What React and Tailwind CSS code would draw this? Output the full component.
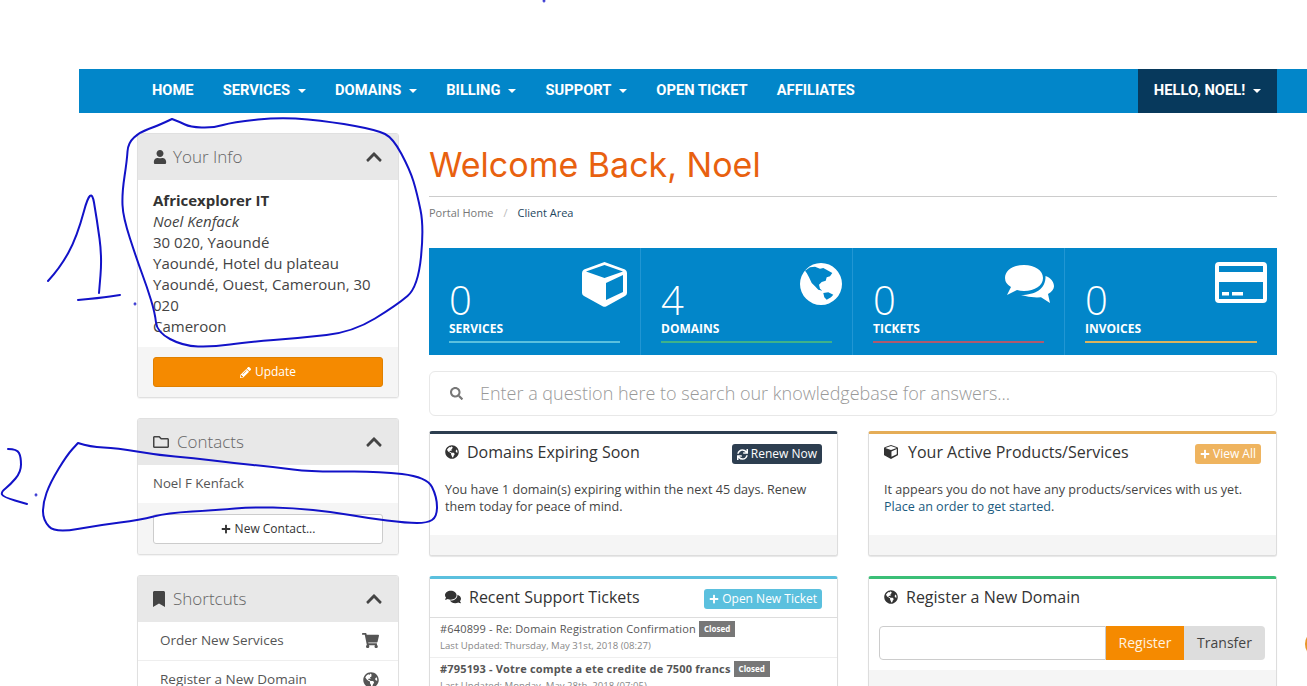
import {
  FaBookmark, FaChevronUp, FaComments, FaGlobeAmericas, FaPencilAlt, FaPlus,
  FaRegFolder, FaSearch, FaShoppingCart, FaSync, FaUser,
} from 'react-icons/fa';

const navItems = [
  { label: 'HOME' },
  { label: 'SERVICES', caret: true },
  { label: 'DOMAINS', caret: true },
  { label: 'BILLING', caret: true },
  { label: 'SUPPORT', caret: true },
  { label: 'OPEN TICKET' },
  { label: 'AFFILIATES' },
];

function CubeIcon({ className }) {
  return (
    <svg className={className} viewBox="0 0 45 45" fill="currentColor" fillRule="evenodd">
      <path d="M22.5 0 L43 7.5 Q45 8.5 45 11 L45 31 Q45 33 43 34 L24 44.5 Q22.5 45 21 44.5 L2 34 Q0 33 0 31 L0 11 Q0 8.5 2 7.5 Z M22.5 3 L4 9.5 L22.5 16 L41 9.5 Z M24 21 L24 38 L41 30 L41 13 Z" />
    </svg>
  );
}

function GlobeIcon({ className }) {
  return (
    <svg className={className} viewBox="0 0 42 42" fill="currentColor" fillRule="evenodd">
      <path d="M21 0 A21 21 0 1 0 21 42 A21 21 0 1 0 21 0 Z M5 7.700 L10 4.300 L15 3.700 L20 5.700 L23.300 5 L28.300 7.700 L32.300 10 L30 13.300 L26.700 14.300 L25.700 17.700 L21.700 19 L19 21.700 L20 25.700 L22.300 27.700 L18.300 26.700 L15 23.300 L11.700 20 L9 14.300 L6.700 10 Z M23.300 30 L28.300 29.300 L33.300 31.700 L31 34.300 L26.700 36.700 L24.300 34.300 Z" />
    </svg>
  );
}

function ChatIcon({ className }) {
  return (
    <svg className={className} viewBox="0 0 49 38" fill="currentColor">
      <path d="M40.500 11 C46 13 49 17 49 21.300 C49 24 47 27 43 29 L45 38 L36 32.300 Q25 33 16 30 C30 30 41 24 40.500 11 Z" />
      <path d="M19 0 C30 0 38 5.500 38 13 C38 20.500 30 26 19 26 Q15 26 12 25 L2 30 L6 22 Q0 18.500 0 13 C0 5.500 8 0 19 0 Z" />
    </svg>
  );
}

function CardIcon({ className }) {
  return (
    <svg className={className} viewBox="0 0 52 41" fill="currentColor" fillRule="evenodd">
      <path d="M4 0 L48 0 Q52 0 52 4 L52 37 Q52 41 48 41 L4 41 Q0 41 0 37 L0 4 Q0 0 4 0 Z M4 4 L4 10 L48 10 L48 4 Z M4 20 L4 37 L48 37 L48 20 Z" />
      <path d="M7 30 H14 V33.500 H7 Z M17 30 H28 V33.500 H17 Z" />
    </svg>
  );
}

const stats = [
  { n: '0', label: 'SERVICES', Icon: CubeIcon, icon: 'w-[45px] h-[45px] right-[13px] top-[14px]', line: 'bg-[#5bc0de]' },
  { n: '4', label: 'DOMAINS', Icon: GlobeIcon, icon: 'w-[42px] h-[42px] right-[10px] top-[15px]', line: 'bg-[#3fb28a]' },
  { n: '0', label: 'TICKETS', Icon: ChatIcon, icon: 'w-[49px] h-[38px] right-[10px] top-[17px]', line: 'bg-[#b0596f]' },
  { n: '0', label: 'INVOICES', Icon: CardIcon, icon: 'w-[52px] h-[41px] right-[10px] top-[14px]', line: 'bg-[#d9b45f]' },
];

// hand drawn pen marks, coordinates are page pixels
const loopOne = [[172,119],[180,122],[190,127],[213,128],[233,122],[283,117],[333,122],[377,130],[393,138],[410,170],[417,193],[424,227],[418,287],[397,305],[353,332],[300,338],[247,342],[213,347],[183,346],[157,332],[155,313],[147,287],[137,260],[123,217],[122,193],[127,160],[128,143],[140,132],[157,126],[172,119]];
const loopTwo = [[78,443],[90,447],[117,448],[157,455],[193,458],[233,463],[273,467],[313,472],[377,471],[427,477],[437,497],[437,517],[427,523],[407,523],[367,518],[333,512],[293,508],[253,507],[217,510],[167,513],[140,520],[100,525],[55,533],[43,520],[43,503],[50,483],[67,455],[78,443]];
const numOne = [[48,281],[60,268],[77,237],[91,185],[97,220],[102,257],[99,293]];
const numOneBase = [[78,300],[100,298],[120,295]];
const numTwo = [[8,449],[17,449],[21,457],[21,472],[10,485],[1,492],[3,497],[27,504]];

function smooth(pts) {
  let d = `M${pts[0][0]} ${pts[0][1]}`;
  for (let i = 1; i < pts.length - 1; i++) {
    const mx = (pts[i][0] + pts[i + 1][0]) / 2;
    const my = (pts[i][1] + pts[i + 1][1]) / 2;
    d += ` Q${pts[i][0]} ${pts[i][1]} ${mx} ${my}`;
  }
  const last = pts[pts.length - 1];
  return `${d} L${last[0]} ${last[1]}`;
}

function SidePanel({ Icon, iconSize, title, gap, children }) {
  return (
    <div className="border border-[#e0e0e0] rounded-[3px] bg-white shadow-[0_1px_1px_rgba(0,0,0,0.05)] overflow-hidden">
      <div className="h-[46px] bg-[#e8e8e8] pl-[15px] pr-[15px] flex items-center">
        <Icon className={`${iconSize} text-[#444]`} />
        <span className={`${gap} text-[17px] font-light text-[#666]`}>{title}</span>
        <FaChevronUp className="ml-auto text-[18px] text-[#444]" />
      </div>
      {children}
    </div>
  );
}

function Card({ top, icon, title, gap, action, children, footer = 'h-5' }) {
  return (
    <div className={`border border-[#ddd] border-t-[3px] ${top} rounded-[3px] bg-white shadow-[0_1px_1px_rgba(0,0,0,0.1)] overflow-hidden`}>
      <div className="flex items-start h-[38px] pt-[10px] pl-[15px] pr-[15px]">
        <div className="h-4 flex items-center text-[#333]">{icon}</div>
        <span className={`${gap} text-[16px] leading-4 text-[#333]`}>{title}</span>
        {action}
      </div>
      {children}
      {footer && <div className={`${footer} bg-[#f5f5f5]`} />}
    </div>
  );
}

function TicketRow({ title, updated, bold, className }) {
  return (
    <div className={`px-[10px] pt-[3px] ${className}`}>
      <div className={`text-[11px] leading-4 text-[#555] tracking-[0.17px] flex items-center ${bold ? 'font-bold' : ''}`}>
        {title}
        <span className="ml-[3px] px-[5px] h-4 bg-[#777] text-white text-[8px] font-bold tracking-normal flex items-center">Closed</span>
      </div>
      <div className="text-[9.6px] leading-4 text-[#888] mt-px">{updated}</div>
    </div>
  );
}

export default function App() {
  return (
    <div className="relative h-[686px] w-[1307px] overflow-hidden bg-white pl-[79px] pt-[69px] font-['Open_Sans',sans-serif] text-[#333]">
      <nav className="h-11 bg-[#0286c9] flex items-center pl-[58.5px] pr-[30px] font-['Roboto',sans-serif] text-[14.7px] font-bold text-white">
        {navItems.map((item) => (
          <a key={item.label} className="px-[14.5px] pb-[2px] h-full flex items-center whitespace-nowrap">
            {item.label}
            {item.caret && <span className="ml-2 mt-[2px] inline-block border-x-4 border-t-4 border-x-transparent border-t-white" />}
          </a>
        ))}
        <a className="ml-auto pb-[2px] h-full w-[139px] bg-[#07395c] flex items-center justify-center whitespace-nowrap">
          HELLO, NOEL!
          <span className="ml-2 mt-[2px] inline-block border-x-4 border-t-4 border-x-transparent border-t-white" />
        </a>
      </nav>

      <div className="flex pl-[58px] pr-[30px] pt-5 gap-[30px]">
        <aside className="w-[262px] shrink-0 flex flex-col gap-5">
          <SidePanel Icon={FaUser} iconSize="text-[14px]" title="Your Info" gap="ml-[6px]">
            <div className="px-[15px] pt-[10px] pb-[10px] h-[167px] text-[15px] leading-[21px] text-[#444]">
              <strong className="text-[#333]">Africexplorer IT</strong>
              <br />
              <em>Noel Kenfack</em>
              <br />
              30 020, Yaoundé
              <br />
              Yaoundé, Hotel du plateau
              <br />
              Yaoundé, Ouest, Cameroun, 30 020
              <br />
              Cameroon
            </div>
            <div className="bg-[#f5f5f5] h-[50px] px-[15px] pt-[10px]">
              <button className="w-full h-[30px] bg-[#f58a00] border border-[#e08000] rounded-[3px] text-white text-[12px] flex items-center justify-center gap-1">
                <FaPencilAlt className="text-[11px]" /> Update
              </button>
            </div>
          </SidePanel>

          <SidePanel Icon={FaRegFolder} iconSize="text-[16px]" title="Contacts" gap="ml-2">
            <div className="h-[38px] px-[15px] flex items-center text-[13.2px] text-[#555]">Noel F Kenfack</div>
            <div className="bg-[#f5f5f5] h-[51px] px-[15px] pt-[11px]">
              <button className="w-full h-[30px] bg-white border border-[#ccc] rounded-[3px] text-[#333] text-[12px] flex items-center justify-center gap-1">
                <FaPlus className="text-[10px]" /> New Contact...
              </button>
            </div>
          </SidePanel>

          <SidePanel Icon={FaBookmark} iconSize="text-[16px] -ml-[2px]" title="Shortcuts" gap="ml-[6px]">
            <div className="h-[39px] pl-[22px] pr-[19px] pb-px flex items-center text-[13.5px] text-[#555] border-b border-[#eee]">
              Order New Services
              <FaShoppingCart className="ml-auto text-[17px] text-[#555]" />
            </div>
            <div className="h-[39px] pl-[22px] pr-[19px] pb-[2px] flex items-center text-[13.5px] text-[#555]">
              Register a New Domain
              <FaGlobeAmericas className="ml-auto text-[16px] text-[#555]" />
            </div>
          </SidePanel>
        </aside>

        <main className="flex-1 min-w-0">
          <h1 className="font-['Inter',sans-serif] text-[34px] leading-[40px] text-[#e8610f] mt-3 pb-[11px] border-b border-[#ccc]">
            Welcome Back, Noel
          </h1>
          <div className="mt-[9px] text-[11px] leading-[14px] flex text-[#777]">
            <span>Portal Home</span>
            <span className="mx-[10px] text-[#bbb]">/</span>
            <span className="text-[#23465e]">Client Area</span>
          </div>

          <div className="mt-[28px] h-[107px] bg-[#0286c9] grid grid-cols-4">
            {stats.map((s, i) => (
              <div key={s.label} className={`relative pl-5 pr-5 ${i < 3 ? 'border-r border-[#2196d3]' : ''}`}>
                <div className="mt-[31px] text-[40px] leading-[42px] font-light text-white">{s.n}</div>
                <div className="text-[12px] leading-4 font-bold text-white">{s.label}</div>
                <div className={`mt-1 h-[2px] ${s.line}`} />
                <s.Icon className={`absolute text-white ${s.icon}`} />
              </div>
            ))}
          </div>

          <div className="mt-4 h-[45px] border border-[#e8e8e8] rounded-[6px] flex items-center pl-5 text-[18px] font-light text-[#999]">
            <FaSearch className="text-[13px] text-[#777]" />
            <span className="ml-[17px]">Enter a question here to search our knowledgebase for answers...</span>
          </div>

          <div className="mt-[15px] grid grid-cols-2 gap-x-[30px] gap-y-5">
            <Card
              top="border-t-[#2d3e50]"
              icon={<FaGlobeAmericas className="text-[14px]" />}
              title="Domains Expiring Soon"
              gap="ml-2"
              action={
                <button className="ml-auto h-5 px-[5px] bg-[#2d3e50] rounded-[3px] text-white text-[12px] flex items-center gap-[3px]">
                  <FaSync className="text-[11px]" /> Renew Now
                </button>
              }
            >
              <div className="h-[63px] px-[15px] pt-[9px] text-[12.6px] leading-[17px] text-[#444]">
                You have 1 domain(s) expiring within the next 45 days. Renew them today for peace of mind.
              </div>
            </Card>

            <Card
              top="border-t-[#e5ad57]"
              icon={<CubeIcon className="w-[14px] h-[14px]" />}
              title="Your Active Products/Services"
              gap="ml-[10px]"
              action={
                <button className="ml-auto h-5 px-[5px] bg-[#efb45f] rounded-[3px] text-white text-[12px] flex items-center gap-[3px]">
                  <FaPlus className="text-[10px]" /> View All
                </button>
              }
            >
              <div className="h-[63px] px-[15px] pt-[9px] text-[12.6px] leading-[17px] text-[#444]">
                It appears you do not have any products/services with us yet.
                <br />
                <span className="text-[#1a5a7e]">Place an order to get started</span>.
              </div>
            </Card>

            <Card
              top="border-t-[#5bc0de]"
              icon={<FaComments className="text-[16px]" />}
              title="Recent Support Tickets"
              gap="ml-2"
              footer=""
              action={
                <button className="ml-auto h-5 px-[5px] bg-[#5bc0de] rounded-[3px] text-white text-[12px] flex items-center gap-[3px]">
                  <FaPlus className="text-[10px]" /> Open New Ticket
                </button>
              }
            >
              <div className="border-t border-[#ddd]">
                <TicketRow
                  className="h-10 border-b border-[#eee]"
                  title="#640899 - Re: Domain Registration Confirmation"
                  updated="Last Updated: Thursday, May 31st, 2018 (08:27)"
                />
                <TicketRow
                  bold
                  className="h-[60px]"
                  title="#795193 - Votre compte a ete credite de 7500 francs"
                  updated="Last Updated: Monday, May 28th, 2018 (07:05)"
                />
              </div>
            </Card>

            <Card top="border-t-[#3bbf77]" icon={<FaGlobeAmericas className="text-[14px]" />} title="Register a New Domain" gap="ml-2" footer="h-10">
              <div className="pl-[10px] pr-[11px] pt-[9px] pb-[10px] flex h-[53px]">
                <div className="flex-1 border border-[#ccc] rounded-l-[4px] bg-white" />
                <button className="w-[78px] pb-[2px] bg-[#f58a00] text-[#fff3e0] text-[14px]">Register</button>
                <button className="w-[81px] pb-[2px] bg-[#ddd] text-[#444] text-[14px] rounded-r-[4px]">Transfer</button>
              </div>
            </Card>
          </div>
        </main>
      </div>

      {/* pen annotations and the round widget poking in from the right edge */}
      <svg className="absolute left-0 top-0 pointer-events-none" width="1307" height="686" fill="none" stroke="#1212c8" strokeWidth="2" strokeLinecap="round">
        <path d={smooth(loopOne)} />
        <path d={smooth(loopTwo)} />
        <path d={smooth(numOne)} />
        <path d={smooth(numOneBase)} />
        <path d={smooth(numTwo)} />
        <circle cx="135" cy="304" r="0.4" />
        <circle cx="36" cy="495" r="0.4" />
        <circle cx="544" cy="1" r="0.4" />
      </svg>
      <div className="absolute left-[1305px] top-[630px] w-7 h-7 rounded-full bg-[#e8962a]" />
    </div>
  );
}
